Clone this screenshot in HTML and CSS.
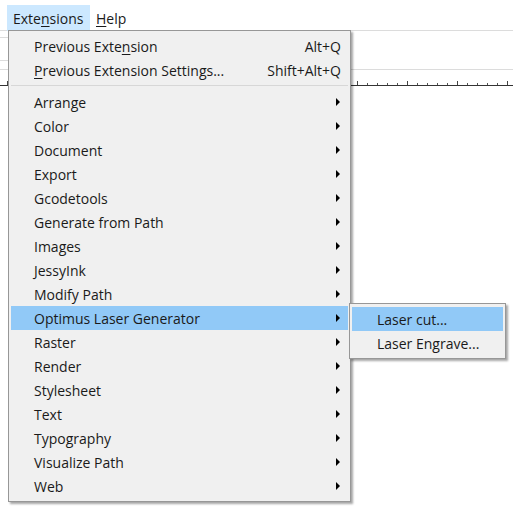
FILE: index.html
```html
<!DOCTYPE html>
<html>
<head>
<meta charset="utf-8">
<link rel="stylesheet" href="styles.css">
</head>
<body>
<div class="app">
  <div class="menubar">
    <span class="mb-item active">Exte<u>n</u>sions</span>
    <span class="mb-item"><u>H</u>elp</span>
  </div>
  <div class="toolbar">
    <div class="tool-left"></div>
    <div class="tool-main"></div>
  </div>
  <div class="ruler"></div>

  <div class="menu">
    <div class="item"><span class="label">Previous Exte<u>n</u>sion</span><span class="sc">Alt+Q</span></div>
    <div class="item"><span class="label"><u>P</u>revious Extension Settings...</span><span class="sc">Shift+Alt+Q</span></div>
    <div class="sep"></div>
    <div class="item sub"><span class="label">Arrange</span><span class="arrow"></span></div>
    <div class="item sub"><span class="label">Color</span><span class="arrow"></span></div>
    <div class="item sub"><span class="label">Document</span><span class="arrow"></span></div>
    <div class="item sub"><span class="label">Export</span><span class="arrow"></span></div>
    <div class="item sub"><span class="label">Gcodetools</span><span class="arrow"></span></div>
    <div class="item sub"><span class="label">Generate from Path</span><span class="arrow"></span></div>
    <div class="item sub"><span class="label">Images</span><span class="arrow"></span></div>
    <div class="item sub"><span class="label">JessyInk</span><span class="arrow"></span></div>
    <div class="item sub"><span class="label">Modify Path</span><span class="arrow"></span></div>
    <div class="item sub hl"><span class="label">Optimus Laser Generator</span><span class="arrow"></span></div>
    <div class="item sub"><span class="label">Raster</span><span class="arrow"></span></div>
    <div class="item sub"><span class="label">Render</span><span class="arrow"></span></div>
    <div class="item sub"><span class="label">Stylesheet</span><span class="arrow"></span></div>
    <div class="item sub"><span class="label">Text</span><span class="arrow"></span></div>
    <div class="item sub"><span class="label">Typography</span><span class="arrow"></span></div>
    <div class="item sub"><span class="label">Visualize Path</span><span class="arrow"></span></div>
    <div class="item sub"><span class="label">Web</span><span class="arrow"></span></div>
  </div>

  <div class="submenu">
    <div class="item hl"><span class="label">Laser cut...</span></div>
    <div class="item"><span class="label">Laser Engrave...</span></div>
  </div>
</div>
</body>
</html>
```
FILE: styles.css
```css
* { box-sizing: border-box; }
html, body { margin: 0; padding: 0; background: #ffffff; }
body {
  font-family: "Open Sans", "Noto Sans", sans-serif;
  font-size: 14px;
  color: #1a1a1a;
  width: 513px;
  height: 511px;
  overflow: hidden;
}
u { text-decoration: underline; text-underline-offset: 2px; }
.app { position: relative; width: 513px; height: 511px; }

.menubar {
  display: flex;
  height: 31px;
  padding: 5px 0 0 7px;
  border-bottom: 1px solid #dcdcdc;
}
.mb-item {
  display: flex;
  align-items: center;
  height: 26px;
  padding: 0 6px;
}
.mb-item.active { background: #cce8ff; width: 83px; }

.toolbar {
  display: flex;
  height: 39px;
  border-bottom: 1px solid #dcdcdc;
}
.tool-left {
  width: 8px;
  margin-top: 6px;
  height: 24px;
  border-top: 1px solid #dcdcdc;
  border-bottom: 1px solid #dcdcdc;
}
.tool-main { flex: 1; }

.ruler {
  height: 16px;
  background:
    linear-gradient(#333, #333) 0 15px / 100% 1px no-repeat,
    repeating-linear-gradient(90deg, transparent 0 7px, #444 7px 8px, transparent 8px 50px) 0 11px / 100% 4px no-repeat,
    repeating-linear-gradient(90deg, transparent 0 7px, #555 7px 8px, transparent 8px 10px) 0 13px / 100% 2px no-repeat;
}

.menu {
  position: absolute;
  left: 8px;
  top: 30px;
  width: 343px;
  padding: 3px 2px 3px 2px;
  background: #f0f0f0;
  border: 1px solid #979797;
  box-shadow: 2px 2px 2px rgba(0,0,0,0.35);
}
.item {
  display: flex;
  align-items: center;
  justify-content: space-between;
  height: 24px;
  padding: 0 7px 0 23px;
}
.item.hl { background: #91c9f7; }
.sc { color: #1a1a1a; }
.arrow {
  width: 0; height: 0;
  border-top: 4px solid transparent;
  border-bottom: 4px solid transparent;
  border-left: 4px solid #000;
  margin-right: 1px;
}
.sep {
  height: 1px;
  background: #d7d7d7;
  margin: 3px 0 4px 0;
}

.submenu {
  position: absolute;
  left: 349px;
  top: 303px;
  width: 157px;
  padding: 3px 2px;
  background: #f0f0f0;
  border: 1px solid #979797;
  box-shadow: 2px 2px 2px rgba(0,0,0,0.35);
}
.submenu .item { padding-left: 25px; }
```
